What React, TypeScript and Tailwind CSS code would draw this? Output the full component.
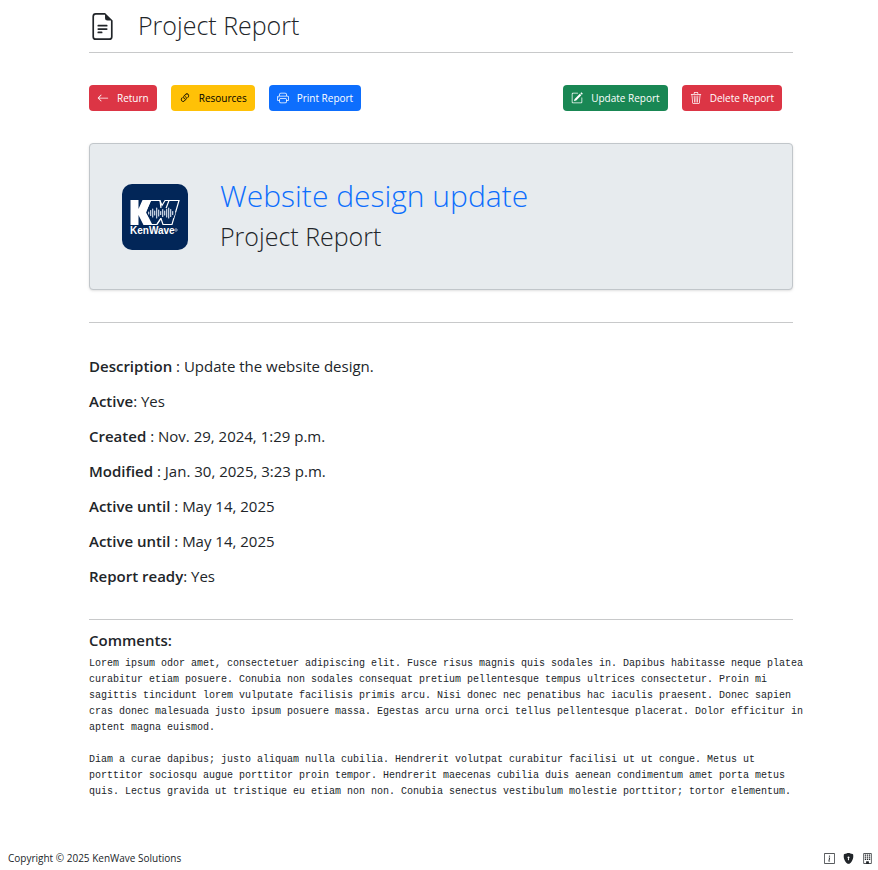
import type { ReactNode } from "react";
import {
  BsArrowLeft,
  BsBuilding,
  BsFileEarmarkText,
  BsInfoSquare,
  BsLink45Deg,
  BsPencilSquare,
  BsPrinter,
  BsShieldLockFill,
  BsTrash3,
} from "react-icons/bs";

const details = [
  { label: "Description", sep: " : ", value: "Update the website design." },
  { label: "Active", sep: ": ", value: "Yes" },
  { label: "Created", sep: " : ", value: "Nov. 29, 2024, 1:29 p.m." },
  { label: "Modified", sep: " : ", value: "Jan. 30, 2025, 3:23 p.m." },
  { label: "Active until", sep: " : ", value: "May 14, 2025" },
  { label: "Active until", sep: " : ", value: "May 14, 2025" },
  { label: "Report ready", sep: ": ", value: "Yes" },
];

const comments = `Lorem ipsum odor amet, consectetuer adipiscing elit. Fusce risus magnis quis sodales in. Dapibus habitasse neque platea
curabitur etiam posuere. Conubia non sodales consequat pretium pellentesque tempus ultrices consectetur. Proin mi
sagittis tincidunt lorem vulputate facilisis primis arcu. Nisi donec nec penatibus hac iaculis praesent. Donec sapien
cras donec malesuada justo ipsum posuere massa. Egestas arcu urna orci tellus pellentesque placerat. Dolor efficitur in
aptent magna euismod.

Diam a curae dapibus; justo aliquam nulla cubilia. Hendrerit volutpat curabitur facilisi ut ut congue. Metus ut
porttitor sociosqu augue porttitor proin tempor. Hendrerit maecenas cubilia duis aenean condimentum amet porta metus
quis. Lectus gravida ut tristique eu etiam non non. Conubia senectus vestibulum molestie porttitor; tortor elementum.`;

function ActionButton({ icon, label, className }: { icon: ReactNode; label: string; className: string }) {
  return (
    <button type="button" className={`flex h-[26px] items-center gap-2 rounded px-2 text-[10px] whitespace-nowrap ${className}`}>
      {icon}
      {label}
    </button>
  );
}

function Logo() {
  const bars = [3, 6, 9, 5, 11, 7, 4, 8, 5, 9, 11, 8, 4];
  return (
    <svg viewBox="0 0 66 66" className="size-[66px] shrink-0 rounded-[10px]" role="img" aria-label="KenWave">
      <rect width="66" height="66" fill="#022658" />
      <path d="M28 16.5h10l2 5 3-5h14l-7 24h-9l-2-6-4 6h-8l-4-11z" fill="none" stroke="#fff" strokeWidth="1.2" />
      <path d="M47 16.5l-3 8M38 16.5l1 8M39 34l-4 6" fill="none" stroke="#fff" strokeWidth="1.2" />
      <path d="M8.5 16h8v9l4-9h9l-5.5 12 6.5 13h-9l-5-10v10h-8z" fill="#fff" />
      <path d="M24.5 29l3-5h24l2 5-2 5h-24z" fill="#022658" />
      {bars.map((h, i) => (
        <rect key={i} x={26 + i * 2} y={29 - h / 2} width="1.3" height={h} rx="0.6" fill="#c3cede" />
      ))}
      <text x="8" y="50" fontSize="10" fontWeight="700" fill="#fff" fontFamily="Liberation Sans, sans-serif">
        KenWave
      </text>
      <circle cx="54" cy="46" r="1.2" fill="none" stroke="#c3cede" strokeWidth="0.8" />
    </svg>
  );
}

export default function App() {
  return (
    <div className="flex min-h-screen flex-col bg-white font-['Open_Sans','Noto_Sans',sans-serif] text-[#212529]">
      <main className="pr-[85px] pl-[89px]">
        <header className="flex h-[53px] items-center gap-[22px] border-b border-[#c8c9ca]">
          <BsFileEarmarkText className="size-[27px] shrink-0" />
          <h1 className="text-[25px] font-light">Project Report</h1>
        </header>

        {/* Actions */}
        <div className="mt-8 flex justify-between pr-[11px]">
          <div className="flex gap-3.5">
            <ActionButton icon={<BsArrowLeft className="size-3" />} label="Return" className="bg-[#dc3545] text-white" />
            <ActionButton icon={<BsLink45Deg className="size-3" />} label="Resources" className="bg-[#ffc107] text-black" />
            <ActionButton icon={<BsPrinter className="size-3" />} label="Print Report" className="bg-[#0d6efd] text-white" />
          </div>
          <div className="flex gap-3.5">
            <ActionButton icon={<BsPencilSquare className="size-3" />} label="Update Report" className="bg-[#198754] text-white" />
            <ActionButton icon={<BsTrash3 className="size-3" />} label="Delete Report" className="bg-[#dc3545] text-white" />
          </div>
        </div>

        {/* Project banner */}
        <section className="mt-8 flex items-center gap-8 rounded border border-[#c1c6ca] bg-[#e7ebee] px-8 pt-9 pb-[35px] shadow-sm">
          <Logo />
          <div>
            <h2 className="text-[30px] leading-8 font-light text-[#0d6efd]">Website design update</h2>
            <p className="mt-1.5 text-[25px] leading-9 font-light">Project Report</p>
          </div>
        </section>

        <section className="mt-8 border-t border-[#c8c9ca] pt-[26px] pb-[25px]">
          {details.map((item, i) => (
            <p key={i} className="text-[15px] leading-[35px] whitespace-pre-wrap">
              <strong className="font-semibold">{item.label}</strong>
              {item.sep}
              {item.value}
            </p>
          ))}
        </section>

        <section className="border-t border-[#c8c9ca] pt-2">
          <h3 className="text-[15px] leading-6 font-semibold">Comments:</h3>
          <pre className="mt-1 font-['Liberation_Mono',monospace] text-[10px] leading-4">{comments}</pre>
        </section>
      </main>

      <footer className="mt-auto flex h-6 items-center justify-between pr-[5px] pl-2 text-[10px]">
        <p>Copyright © 2025 KenWave Solutions</p>
        <nav className="flex gap-2">
          <a href="#about" aria-label="About"><BsInfoSquare className="size-[11px]" /></a>
          <a href="#privacy" aria-label="Privacy"><BsShieldLockFill className="size-[11px]" /></a>
          <a href="#company" aria-label="Company"><BsBuilding className="size-[11px]" /></a>
        </nav>
      </footer>
    </div>
  );
}
